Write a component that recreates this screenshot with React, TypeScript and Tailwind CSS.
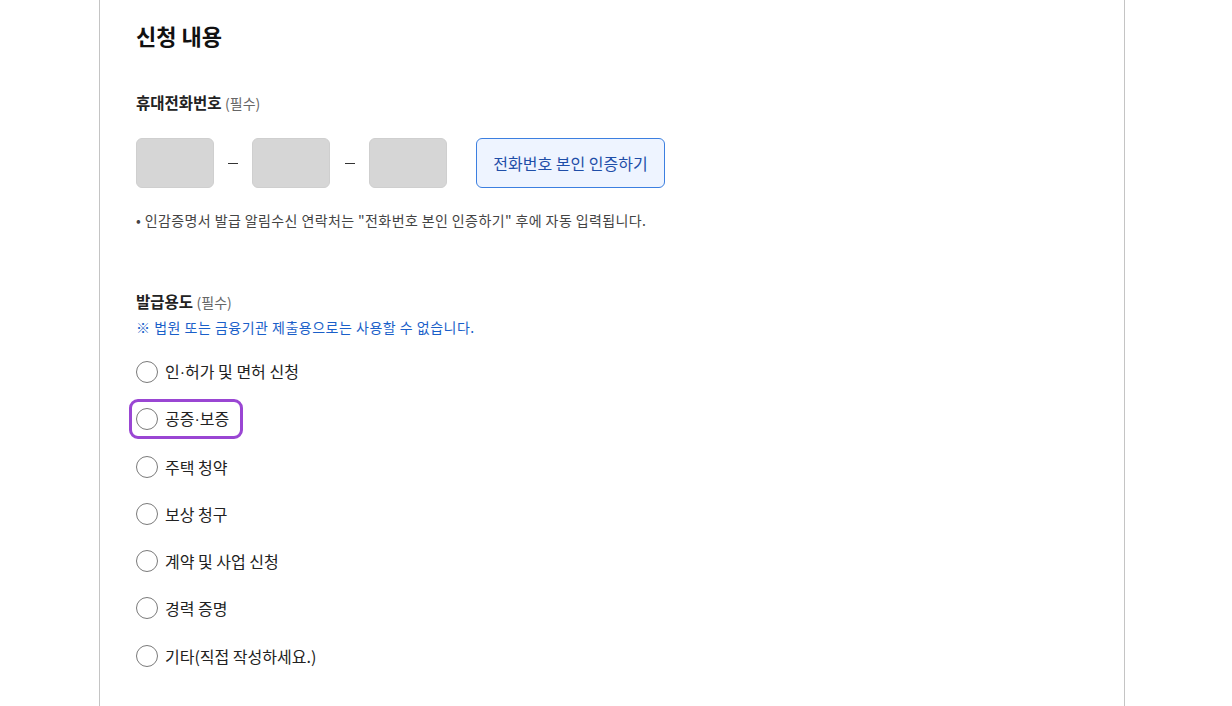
import { useState } from "react";

const PURPOSES: [string, string?][] = [
  ["인", "허가 및 면허 신청"],
  ["공증", "보증"],
  ["주택 청약"],
  ["보상 청구"],
  ["계약 및 사업 신청"],
  ["경력 증명"],
  ["기타(직접 작성하세요.)"],
];

function PhoneBox() {
  return <div className="w-[78px] h-[50px] rounded-[6px] bg-[#d6d6d6] border border-[#cfcfcf]" />;
}

function Dash({ wide }: { wide?: boolean }) {
  return (
    <div className={(wide ? "w-[39px]" : "w-[38px]") + " flex justify-center"}>
      <div className="w-[10px] h-px bg-[#333]" />
    </div>
  );
}

export default function App() {
  const [focused] = useState(1);

  return (
    <div
      className="w-[1232px] h-[706px] bg-white overflow-hidden"
      style={{ fontFamily: '"Noto Sans CJK KR", "Noto Sans", sans-serif' }}
    >
      <div className="ml-[99px] w-[1026px] h-full border-x border-[#c4c4c4] pl-[36px] pt-[20px]">
        <h2 className="text-[22px] leading-[30px] font-bold text-[#111]">신청 내용</h2>

        {/* 휴대전화번호 */}
        <div className="mt-[41px] text-[15.5px] leading-[22px] font-bold text-[#222]">
          휴대전화번호 <span className="text-[14px] font-normal text-[#666]">(필수)</span>
        </div>
        <div className="mt-[24px] flex items-center">
          <PhoneBox />
          <Dash />
          <PhoneBox />
          <Dash wide />
          <PhoneBox />
          <button className="ml-[29px] w-[189px] h-[50px] rounded-[6px] border border-[#3c7fe0] bg-[#eef4ff] text-[16px] text-[#1f4ea8]">
            전화번호 본인 인증하기
          </button>
        </div>
        <p className="mt-[22px] text-[14px] leading-[20px] tracking-[0.4px] text-[#444]">
          • 인감증명서 발급 알림수신 연락처는 "전화번호 본인 인증하기" 후에 자동 입력됩니다.
        </p>

        {/* 발급용도 */}
        <div className="mt-[60px] text-[15.5px] leading-[22px] font-bold text-[#222]">
          발급용도 <span className="text-[14px] font-normal text-[#666]">(필수)</span>
        </div>
        <p className="mt-[4px] text-[14px] leading-[20px] tracking-[0.5px] text-[#1a5fc9]">
          ※ 법원 또는 금융기관 제출용으로는 사용할 수 없습니다.
        </p>

        <div className="mt-[18px] flex flex-col items-start gap-[13.3px]">
          {PURPOSES.map(([a, b], i) => (
            <label
              key={a + (b ?? "")}
              className={
                "-ml-[4px] pl-[4px] pr-[11px] h-[34px] inline-flex items-center gap-[7px] rounded-[6px] cursor-pointer " +
                (i === focused ? "outline-3 outline-[#9a46d3]" : "")
              }
            >
              <span className="w-[22px] h-[22px] rounded-full border-[1.5px] border-[#7a7a7a] bg-white" />
              <span className="text-[16px] text-[#222]">
                {a}
                {b && (
                  <>
                    <span style={{ fontFamily: '"Liberation Sans", sans-serif' }}>·</span>
                    {b}
                  </>
                )}
              </span>
            </label>
          ))}
        </div>
      </div>
    </div>
  );
}
